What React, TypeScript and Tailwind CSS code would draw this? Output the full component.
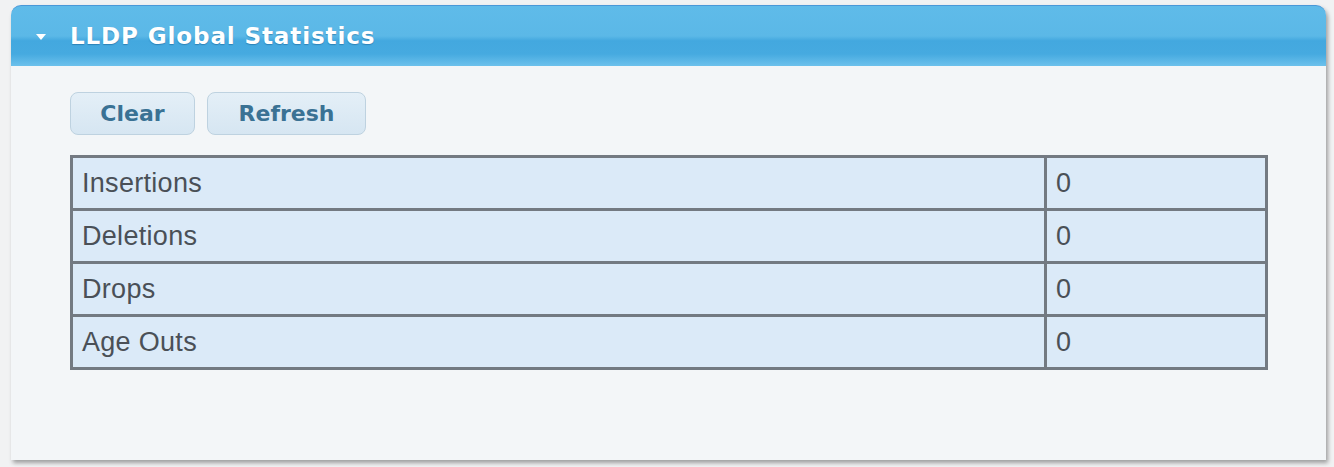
import React from "react";

const rows = [
  { label: "Insertions", value: "0" },
  { label: "Deletions", value: "0" },
  { label: "Drops", value: "0" },
  { label: "Age Outs", value: "0" },
];

export default function App() {
  return (
    <div className="w-[1334px] h-[467px] bg-[#f1f2f3] pt-[5px] pl-[11px] pr-[8px] pb-[7px] overflow-hidden">
      <div className="h-full flex flex-col rounded-t-[10px] bg-[#f3f6f8] shadow-[2px_3px_4px_rgba(0,0,0,0.35)]">
        <div className="h-[61px] shrink-0 flex items-center rounded-t-[10px] border-t border-[#4a98d8] bg-[linear-gradient(to_bottom,#5fbbe9_0%,#5bb8e7_50%,#43a8df_58%,#46aae0_80%,#6cc1ec_100%)] pl-[24px]">
          <svg width="12" height="8" viewBox="0 0 12 8" className="mr-[23px] mt-[2px]">
            <polygon points="1,1 11,1 6,7" fill="#ffffff" />
          </svg>
          <span className="font-['DejaVu_Sans',sans-serif] font-bold text-[23px] tracking-[0.9px] text-white [text-shadow:0_1px_1px_rgba(0,60,110,0.35)]">
            LLDP Global Statistics
          </span>
        </div>
        <div className="pl-[59px] pt-[26px]">
          <div className="flex gap-[12px]">
            <button className="w-[125px] h-[43px] rounded-[8px] border border-[#bed2e0] bg-[linear-gradient(to_bottom,#e4eff7,#d6e6f2)] font-['DejaVu_Sans',sans-serif] font-bold text-[22px] text-[#3a7294]">
              Clear
            </button>
            <button className="w-[159px] h-[43px] rounded-[8px] border border-[#bed2e0] bg-[linear-gradient(to_bottom,#e4eff7,#d6e6f2)] font-['DejaVu_Sans',sans-serif] font-bold text-[22px] text-[#3a7294]">
              Refresh
            </button>
          </div>
          <table className="mt-[20px] w-[1198px] border-collapse border-[3px] border-[#737a82] font-['Liberation_Sans',Arial,sans-serif] text-[27px] tracking-[0.3px] text-[#4a5057]">
            <tbody>
              {rows.map((r) => (
                <tr key={r.label} className="h-[53px] bg-[#dbeaf8]">
                  <td className="w-[974px] border-[3px] border-[#737a82] pl-[9px] align-middle leading-none">
                    {r.label}
                  </td>
                  <td className="border-[3px] border-[#737a82] pl-[9px] align-middle leading-none">
                    {r.value}
                  </td>
                </tr>
              ))}
            </tbody>
          </table>
        </div>
      </div>
    </div>
  );
}
